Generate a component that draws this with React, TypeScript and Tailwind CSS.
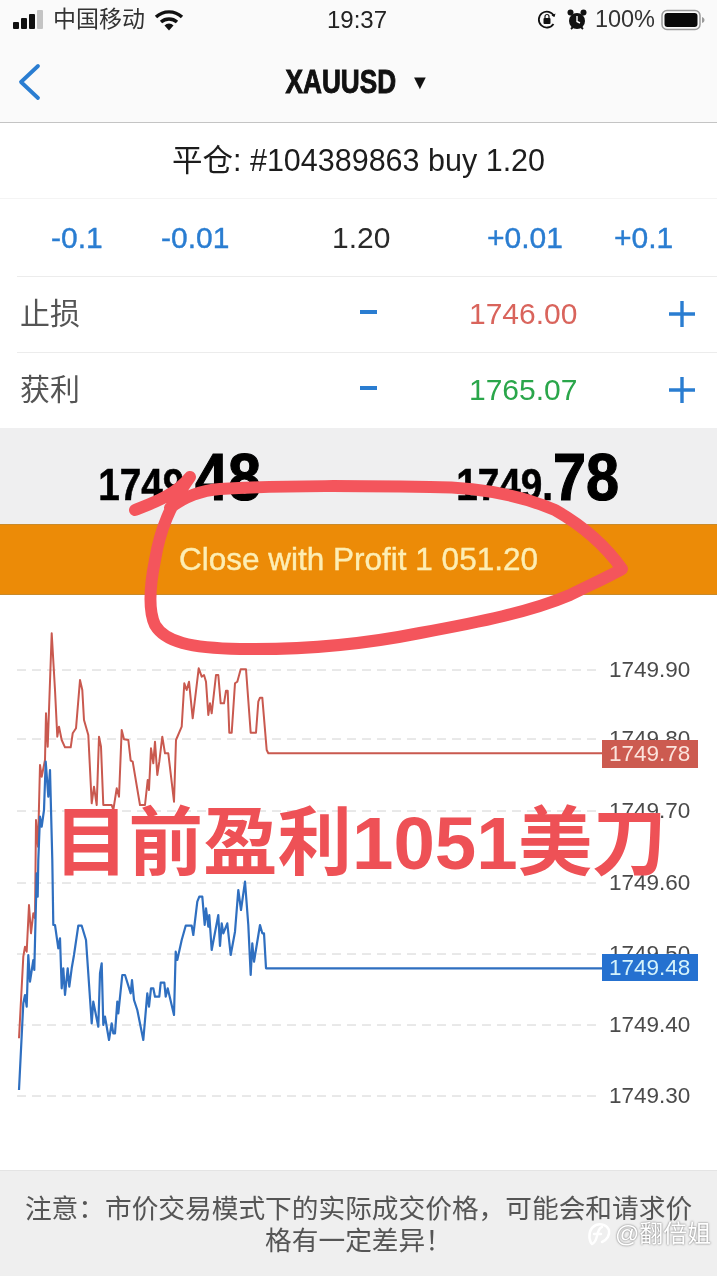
const font = "font-['Liberation_Sans','Noto_Sans_CJK_SC',sans-serif]";

const gridYs = [670, 739, 811, 883, 954, 1025, 1096];
const axisLabels = [
  { y: 670, text: "1749.90" },
  { y: 739, text: "1749.80" },
  { y: 811, text: "1749.70" },
  { y: 883, text: "1749.60" },
  { y: 954, text: "1749.50" },
  { y: 1025, text: "1749.40" },
  { y: 1096, text: "1749.30" },
];

// points traced off the zoomed chart, in zoom units (3x)
const redTop: [number, number][] = [
  [120, 435], [125, 470], [135, 420], [138, 280], [143, 380], [155, 40], [165, 210], [172, 350], [177, 320], [185, 360],
  [195, 382], [212, 382], [218, 340], [228, 325], [240, 180], [247, 210], [252, 300], [265, 345], [275, 550], [282, 500],
  [290, 555], [297, 350], [303, 380], [310, 555], [335, 555], [340, 570], [350, 505], [357, 530], [365, 330], [372, 358],
  [385, 360], [392, 422], [398, 425], [415, 525], [420, 555], [435, 555], [443, 480], [447, 510], [453, 385], [460, 430],
  [465, 365], [472, 465], [478, 425], [487, 350], [495, 400], [505, 400], [522, 545], [528, 360], [545, 320], [553, 190],
  [560, 210], [567, 185], [578, 295], [596, 145], [605, 170], [612, 165], [618, 185], [625, 285], [630, 250], [635, 280],
  [648, 165], [655, 165], [662, 250], [672, 250], [678, 212], [683, 212], [688, 338], [695, 338], [705, 190], [712, 185],
  [722, 148], [738, 148], [752, 338], [768, 338], [775, 245], [780, 233], [787, 233], [800, 390], [805, 400], [1809, 400],
];
const redStart: [number, number][] = [
  [57, 1255], [70, 1010], [75, 980], [80, 995], [87, 855], [93, 940], [100, 880], [105, 895], [108, 600], [114, 680],
];
const blueTop: [number, number][] = [[115, 720], [120, 590], [125, 620], [132, 570], [137, 425], [145, 530], [150, 450], [157, 720]];
const blueStart: [number, number][] = [
  [57, 690], [70, 430], [75, 405], [80, 440], [85, 285], [90, 365], [100, 300], [103, 330], [110, 40], [113, 110],
];
const blueRest: [number, number][] = [
  [160, 195], [165, 195], [175, 265], [180, 235], [185, 385], [190, 325], [195, 405], [203, 325], [208, 380], [215, 325],
  [222, 285], [235, 197], [245, 197], [258, 240], [275, 490], [280, 425], [295, 500], [300, 340], [305, 310], [310, 495],
  [315, 470], [327, 540], [335, 490], [340, 520], [345, 520], [352, 425], [355, 460], [367, 345], [375, 345], [392, 400],
  [396, 360], [402, 420], [412, 450], [430, 540], [442, 400], [447, 440], [453, 385], [460, 385], [465, 410], [478, 410],
  [482, 368], [493, 368], [497, 410], [503, 385], [522, 465], [527, 275], [532, 300], [545, 240], [557, 197], [575, 197],
  [580, 225], [592, 125], [598, 110], [607, 110], [614, 195], [618, 145], [625, 200], [628, 165], [635, 270], [655, 165],
  [660, 258], [665, 190], [670, 220], [682, 190], [692, 285], [705, 215], [715, 90], [723, 150], [735, 65], [745, 195],
  [752, 345], [757, 250], [762, 305], [780, 195], [787, 220], [792, 220], [798, 325], [1809, 325],
];

const toPts = (pts: [number, number][], baseY: number) =>
  pts.map(([x, y]) => `${(x / 3).toFixed(1)},${(baseY + y / 3).toFixed(1)}`).join(" ");

const redLine = toPts(redStart, 620) + " " + toPts(redTop, 620);
const blueLine = toPts(blueStart, 860) + " " + toPts(blueTop, 620) + " " + toPts(blueRest, 860);

function StatusBar() {
  return (
    <div className="h-[38px] flex items-center pl-[12px] pr-[12px] pt-[1px] text-[#1a1a1a]">
      <div className="flex items-center w-[315px]">
        <svg width="32" height="22" viewBox="0 0 32 22">
          <rect x="1" y="13" width="6" height="7" rx="1" fill="#111" />
          <rect x="9" y="9" width="6" height="11" rx="1" fill="#111" />
          <rect x="17" y="5" width="6" height="15" rx="1" fill="#111" />
          <rect x="25" y="1" width="6" height="19" rx="1" fill="#c4c4c4" />
        </svg>
        <span className="text-[23px] leading-none ml-[9px] text-[#333]">中国移动</span>
        <svg className="ml-[9px]" width="30" height="24" viewBox="0 0 30 24">
          <path d="M2 9a19 19 0 0 1 26 0" fill="none" stroke="#111" strokeWidth="3.4" />
          <path d="M7 14a12 12 0 0 1 16 0" fill="none" stroke="#111" strokeWidth="3.4" />
          <path d="M10.5 17.5a6 6 0 0 1 9 0L15 22.5z" fill="#111" />
        </svg>
      </div>
      <span className="text-[24px] leading-none text-[#222]">19:37</span>
      <div className="flex items-center ml-auto">
        <svg width="20" height="22" viewBox="0 0 20 22">
          <path d="M16.5 15A8 8 0 1 1 17 7" fill="none" stroke="#111" strokeWidth="1.8" />
          <path d="M14.5 6.5l3 1.5 1-3.5z" fill="#111" />
          <rect x="6.5" y="9" width="7" height="6" rx="1" fill="#111" />
          <path d="M8 9V7.5a2 2 0 0 1 4 0V9" fill="none" stroke="#111" strokeWidth="1.2" />
        </svg>
        <svg className="ml-[10px]" width="20" height="24" viewBox="0 0 20 24">
          <circle cx="10" cy="13" r="8" fill="#111" />
          <circle cx="3.5" cy="4.5" r="3" fill="#111" />
          <circle cx="16.5" cy="4.5" r="3" fill="#111" />
          <path d="M10 8v5.5l3 1.5" fill="none" stroke="#fff" strokeWidth="1.4" />
          <path d="M4 21l2-2M16 21l-2-2" stroke="#111" strokeWidth="1.8" />
        </svg>
        <span className="text-[23.5px] leading-none ml-[8px] text-[#333]">100%</span>
        <svg className="ml-[6px]" width="44" height="24" viewBox="0 0 44 24">
          <rect x="1" y="2.5" width="38" height="19" rx="5" fill="none" stroke="#9a9a9a" strokeWidth="1.5" />
          <rect x="3.5" y="5" width="33" height="14" rx="3" fill="#0a0a0a" />
          <path d="M41 9v6c1.5-.5 2.5-1.5 2.5-3S42.5 9.5 41 9z" fill="#9a9a9a" />
        </svg>
      </div>
    </div>
  );
}

function NavBar() {
  return (
    <div className="h-[85px] flex items-center justify-center relative border-b border-[#c4c4c4]">
      <svg className="absolute left-[17px] top-[25px]" width="24" height="38" viewBox="0 0 24 38">
        <path d="M21 3L4 19l17 16" fill="none" stroke="#2a7dd1" strokeWidth="3.8" strokeLinecap="round" strokeLinejoin="round" />
      </svg>
      <div className="flex items-center pr-[18px] pt-[2px]">
        <span className="inline-block text-[34px] leading-none font-bold text-[#111] scale-x-[0.77] [-webkit-text-stroke:1px_#111]">XAUUSD</span>
        <span className="text-[20px] leading-none text-[#111] -ml-[3px] pt-[2px]">▼</span>
      </div>
    </div>
  );
}

function StopRow({ label, value, color }: { label: string; value: string; color: string }) {
  return (
    <div className="h-[76px] pl-[20px] flex items-center relative">
      <div className="absolute left-[17px] right-0 top-0 h-px bg-[#ececec]" />
      <span className="text-[30px] leading-none text-[#555] w-[340px] shrink-0">{label}</span>
      <span className="w-[17px] h-[4px] bg-[#2a7dd1] shrink-0 mb-[4px]" />
      <span className={`text-[30px] leading-none ml-[92px] w-[110px] shrink-0 ${color}`}>{value}</span>
      <svg width="30" height="30" viewBox="0 0 30 30" className="ml-[88px] shrink-0">
        <path d="M15 2v26M2 15h26" stroke="#2a7dd1" strokeWidth="3.4" />
      </svg>
    </div>
  );
}

function PriceQuote({ small, big }: { small: string; big: string }) {
  return (
    <div className="flex items-baseline text-black font-bold">
      <span className="inline-block text-[44px] leading-none scale-x-[0.88] origin-right [-webkit-text-stroke:0.6px_#000]">{small}</span>
      <span className="inline-block text-[66px] leading-none scale-x-[0.9] origin-left [-webkit-text-stroke:1.2px_#000]">{big}</span>
    </div>
  );
}

function Chart() {
  return (
    <div className="h-[575px] relative">
      <svg width="717" height="575" viewBox="0 595 717 575" className="block">
        {gridYs.map((y) => (
          <line key={y} x1="17" x2="600" y1={y} y2={y} stroke="#d2d2d2" strokeWidth="1" strokeDasharray="9 6" />
        ))}
        <polyline points={redLine} fill="none" stroke="#c9594f" strokeWidth="2" strokeLinejoin="round" />
        <polyline points={blueLine} fill="none" stroke="#2f6fc0" strokeWidth="2.2" strokeLinejoin="round" />
      </svg>
      {/* axis prices sit over the grid, the last-price tags sit over them */}
      {axisLabels.map((l) => (
        <span key={l.text} className="absolute left-[609px] text-[22.5px] leading-none text-[#4a4a4a]" style={{ top: l.y - 595 - 11 }}>
          {l.text}
        </span>
      ))}
      <div className="absolute left-[602px] top-[145px] w-[96px] h-[28px] bg-[#cc5b50] text-[22.5px] leading-[28px] text-[#fbe3dc] pl-[7px]">
        1749.78
      </div>
      <div className="absolute left-[602px] top-[359px] w-[96px] h-[27px] bg-[#2571d0] text-[22.5px] leading-[27px] text-[#d5f3fb] pl-[7px]">
        1749.48
      </div>
    </div>
  );
}

export default function App() {
  return (
    <div className={`w-[717px] h-[1276px] bg-white relative overflow-hidden blur-[0.4px] ${font}`}>
      <div className="bg-[#fafafa]">
        <StatusBar />
        <NavBar />
      </div>

      <div className="h-[76px] flex items-center justify-center text-[30.5px] leading-none text-[#1c1c1c] border-b border-[#f4f4f4]">
        平仓: #104389863 buy 1.20
      </div>

      <div className="h-[77px] flex items-center relative text-[30px] leading-none text-[#2a7dd1] [-webkit-text-stroke:0.4px_#2a7dd1]">
        <span className="absolute left-[51px]">-0.1</span>
        <span className="absolute left-[161px]">-0.01</span>
        <span className="absolute left-[332px] text-[#2a2a2a] [-webkit-text-stroke:0]">1.20</span>
        <span className="absolute left-[487px]">+0.01</span>
        <span className="absolute left-[614px]">+0.1</span>
      </div>

      <StopRow label="止损" value="1746.00" color="text-[#d9645c]" />
      <StopRow label="获利" value="1765.07" color="text-[#2aa64a]" />

      <div className="h-[96px] bg-[#efeff0] flex items-start pt-[16px]">
        <div className="ml-[85px] w-[358px]">
          <PriceQuote small="1749." big="48" />
        </div>
        <PriceQuote small="1749." big="78" />
      </div>

      <div className="h-[71px] bg-[#ec8b07] border-y border-[#c98a2a] flex items-center justify-center text-[31.5px] leading-none text-[#fdeeb4] [-webkit-text-stroke:0.4px_#fdeeb4]">
        Close with Profit 1 051.20
      </div>

      <Chart />

      <div className="h-[106px] bg-[#efefef] border-t border-[#e4e4e4] px-[20px] pt-[22px] text-center text-[26.7px] leading-[32px] text-[#555]">
        注意：市价交易模式下的实际成交价格，可能会和请求价格有一定差异！
      </div>

      {/* marker annotations drawn on top of the screenshot */}
      <svg className="absolute left-0 top-0 pointer-events-none" width="717" height="1276" viewBox="0 0 717 1276">
        <path
          d="M135 510C150 504 175 496 190 477M190 477C170 505 160 530 155 560C150 585 148 610 155 625C165 642 190 648 240 649C300 650 360 645 420 633C480 622 530 612 570 595C590 585 608 577 622 569C605 545 585 527 555 510C520 495 480 487 430 487C360 486 290 485 220 489C195 491 180 500 170 508"
          fill="none"
          stroke="#f4555c"
          strokeWidth="12"
          strokeLinecap="round"
          strokeLinejoin="round"
        />
      </svg>
      <div className="absolute left-[54px] top-[800px] text-[74.5px] leading-[88px] font-bold text-[#ee5156] whitespace-nowrap">
        目前盈利1051美刀
      </div>
      <div className="absolute left-[585px] top-[1219px] flex items-center text-[24px] leading-none text-white [text-shadow:0_0_2px_#555]">
        <svg width="28" height="30" viewBox="0 0 28 30">
          <path d="M6 24C3 18 4 9 11 6c5-2 11 0 13 5 1 5-2 10-7 12" fill="none" stroke="#fff" strokeWidth="2.5" strokeLinecap="round" />
          <path d="M17 8c-3 1-4 4-5 9-1 4-2 7-5 8M9 15h7" fill="none" stroke="#fff" strokeWidth="2.5" strokeLinecap="round" />
        </svg>
        <span className="ml-[2px]">@翻倍姐</span>
      </div>
    </div>
  );
}
